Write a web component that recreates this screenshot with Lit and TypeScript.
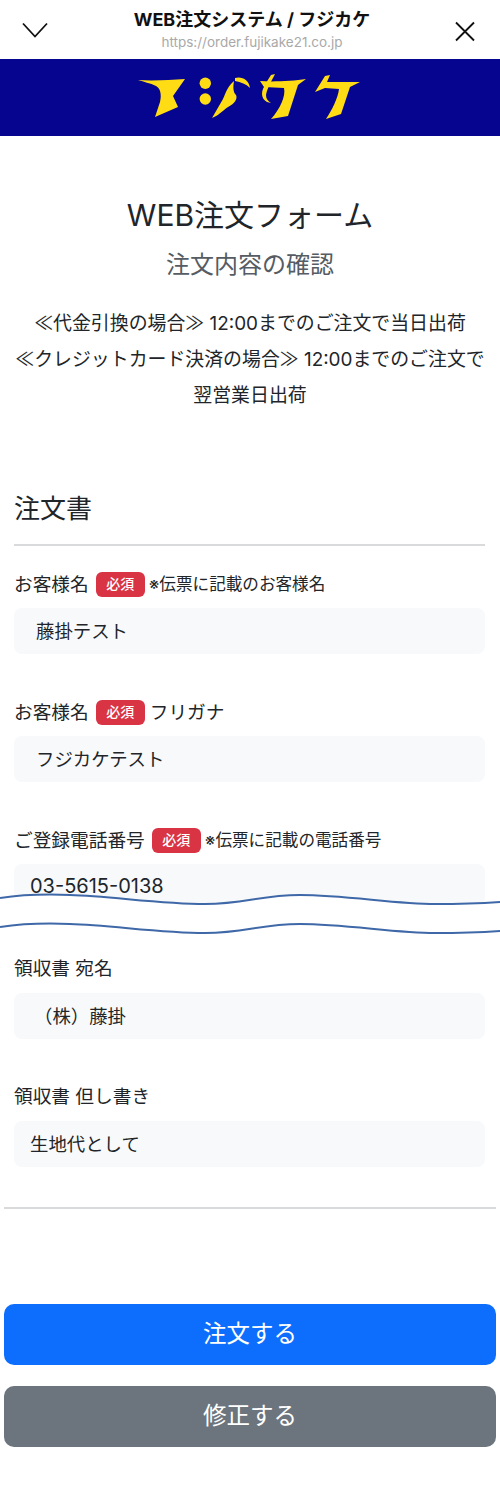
import { LitElement, html, css } from "lit";
import { customElement } from "lit/decorators.js";

@customElement("app-root")
export class AppRoot extends LitElement {
  static styles = css`
    :host {
      display: block;
      width: 500px;
      height: 1510px;
      overflow: hidden;
      position: relative;
      background: #fff;
      color: #212529;
      font-family: "Inter", "Noto Sans CJK JP", "Noto Sans", sans-serif;
    }
    * { box-sizing: border-box; }
    .top {
      height: 59px;
      display: flex;
      align-items: center;
      justify-content: space-between;
      padding: 0 25px 0 21px;
      background: #fff;
    }
    .top-mid { display: flex; flex-direction: column; align-items: center; }
    .top-title { font-size: 18px; font-weight: 700; line-height: 22px; color: #111; }
    .top-url { font-size: 13.5px; line-height: 16px; color: #a9a9a9; margin-top: 3px; }
    .banner {
      height: 77px;
      background: #05058f;
      display: flex;
      align-items: center;
      justify-content: center;
    }
    .head { text-align: center; padding-top: 60px; }
    .h1 { font-size: 30px; line-height: 38px; font-weight: 400; margin: 0; color: #212529; }
    .h2 { font-size: 24px; line-height: 32px; font-weight: 400; margin: 15px 0 0; color: #555c63; }
    .note { font-size: 18.9px; line-height: 36px; margin-top: 25px; padding: 0 8px; color: #212529; }
    .form { padding: 0 15px 0 14px; margin-top: 78px; }
    .form-title { font-size: 26px; line-height: 34px; margin: 0; font-weight: 400; }
    .rule { border: 0; border-top: 2px solid #d8dadc; margin: 18px 0 0; }
    .field { margin-top: 25px; }
    .field + .field { margin-top: 45px; }
    .label { display: flex; align-items: center; gap: 7px; height: 26px; font-size: 18.7px; color: #212529; white-space: nowrap; }
    .label-text { margin-bottom: 4px; }
    .sub { font-size: 16.6px; margin-left: -3px; margin-bottom: 2px; }
    .sub.big { font-size: 18.7px; margin-left: -2px; margin-bottom: 4px; }
    .badge {
      background: #d93444;
      color: #fff;
      font-size: 14px;
      font-weight: 500;
      line-height: 24px;
      height: 25px;
      width: 49px;
      text-align: center;
      border-radius: 6px;
    }
    .input {
      margin-top: 11px;
      height: 46px;
      border-radius: 8px;
      background: #f8f9fa;
      display: flex;
      align-items: center;
      padding: 0 16px 2px;
      font-size: 18.4px;
      color: #212529;
    }
    .input.indent { padding-left: 22px; }
    .input.paren { padding-left: 20px; }
    .input.num { font-size: 20px; }
    .break {
      position: absolute;
      left: 0;
      top: 890px;
      width: 500px;
      height: 50px;
      display: block;
    }
    .lower { padding: 0 15px 0 14px; margin-top: 45px; }
    .lower .field { margin-top: 0; }
    .lower .field + .field { margin-top: 44px; }
    .lower .input { margin-top: 12px; }
    .rule2 { border: 0; border-top: 2px solid #d8dadc; margin: 40px -11px 0 -10px; }
    .btns { margin-top: 95px; padding: 0 4px; display: flex; flex-direction: column; gap: 21px; }
    .btn {
      height: 61px;
      border-radius: 10px;
      color: #fff;
      font-size: 23.5px;
      padding-bottom: 5px;
      display: flex;
      align-items: center;
      justify-content: center;
    }
    .primary { background: #0d6efd; }
    .secondary { background: #6c757d; }
  `;

  field(label: string, badge: boolean, sub: string, value: string, opts: { big?: boolean; cls?: string } = {}) {
    return html`<div class="field">
      <div class="label">
        <span class="label-text">${label}</span>
        ${badge ? html`<span class="badge">必須</span>` : ""}
        ${sub ? html`<span class="sub ${opts.big ? "big" : ""}">${sub}</span>` : ""}
      </div>
      <div class="input ${opts.cls ?? ""}">${value}</div>
    </div>`;
  }

  render() {
    return html`
      <div class="top">
        <svg width="28" height="24" viewBox="0 0 28 24"><path d="M2 5.5 L14 18.5 L26 5.5" fill="none" stroke="#111" stroke-width="1.8"/></svg>
        <div class="top-mid">
          <div class="top-title">WEB注文システム / フジカケ</div>
          <div class="top-url">https://order.fujikake21.co.jp</div>
        </div>
        <svg width="20" height="24" viewBox="0 0 20 24"><path d="M1 4.5 L19 22.5 M19 4.5 L1 22.5" fill="none" stroke="#111" stroke-width="1.8"/></svg>
      </div>
      <div class="banner">
        <svg width="224" height="47" viewBox="0 0 224 47" role="img" aria-label="フジカケ">
          <g fill="#ffdc14">
            <path d="M0 6 C14 7 32 6 47 5 L35 22 L40 33 L17 43 L22 28 C24 20 22 14 18 12 C12 9 6 8 0 6 Z"/>
            <circle cx="67.3" cy="9.3" r="5.7"/>
            <circle cx="67.3" cy="25" r="5.7"/>
            <path d="M74 44 L85 25 C88 18 90 12 96 7 C95 13 95 18 98 21 C100 25 96 30 90 33 C84 37 80 42 74 44 Z"/>
            <path d="M97 4 C104 2 111 6 112 14 C108 10 103 8 97 7 Z"/>
            <path d="M122 7 C135 8 155 7 168 5 C164 8 162 9 160 11 L150 42 L133 45 C142 35 148 22 146 14 L126 13 Z"/>
            <path d="M133 1 L137 0 C133 8 129 15 128 21 C128 25 130 27 133 29 L129 28 C124 25 123 20 125 15 C127 10 130 6 133 1 Z"/>
            <path d="M177 18 L187 2 L192 1 L189 8 L222 8 L212 13 L203 40 L188 45 C194 36 200 24 201 15 L187 14 Z"/>
          </g>
        </svg>
      </div>
      <div class="head">
        <h1 class="h1">WEB注文フォーム</h1>
        <h2 class="h2">注文内容の確認</h2>
        <div class="note">≪代金引換の場合≫ 12:00までのご注文で当日出荷<br />≪クレジットカード決済の場合≫ 12:00までのご注文で<br />翌営業日出荷</div>
      </div>
      <div class="form">
        <h3 class="form-title">注文書</h3>
        <hr class="rule" />
        ${this.field("お客様名", true, "※伝票に記載のお客様名", "藤掛テスト", { cls: "indent" })}
        ${this.field("お客様名", true, "フリガナ", "フジカケテスト", { big: true, cls: "indent" })}
        ${this.field("ご登録電話番号", true, "※伝票に記載の電話番号", "03-5615-0138", { cls: "num" })}
      </div>
      <div class="lower">
        ${this.field("領収書 宛名", false, "", "（株）藤掛", { cls: "paren" })}
        ${this.field("領収書 但し書き", false, "", "生地代として")}
        <hr class="rule2" />
      </div>
      <div class="btns">
        <div class="btn primary">注文する</div>
        <div class="btn secondary">修正する</div>
      </div>
      <svg class="break" viewBox="0 0 500 50" preserveAspectRatio="none">
        <path d="M0 8 C20 5 45 4 70 5 C110 6 160 14 205 14 C245 14 260 5 300 5 C345 5 395 14 435 14 C460 14 485 13 500 12 L500 41 C485 42 460 43 435 43 C395 43 345 34 300 34 C260 34 245 43 205 43 C160 43 110 35 70 34 C45 33 20 34 0 37 Z" fill="#fff"/>
        <path d="M0 8 C20 5 45 4 70 5 C110 6 160 14 205 14 C245 14 260 5 300 5 C345 5 395 14 435 14 C460 14 485 13 500 12" fill="none" stroke="#3f68a8" stroke-width="2"/>
        <path d="M0 37 C20 34 45 33 70 34 C110 35 160 43 205 43 C245 43 260 34 300 34 C345 34 395 43 435 43 C460 43 485 42 500 41" fill="none" stroke="#3f68a8" stroke-width="2"/>
      </svg>
    `;
  }
}
